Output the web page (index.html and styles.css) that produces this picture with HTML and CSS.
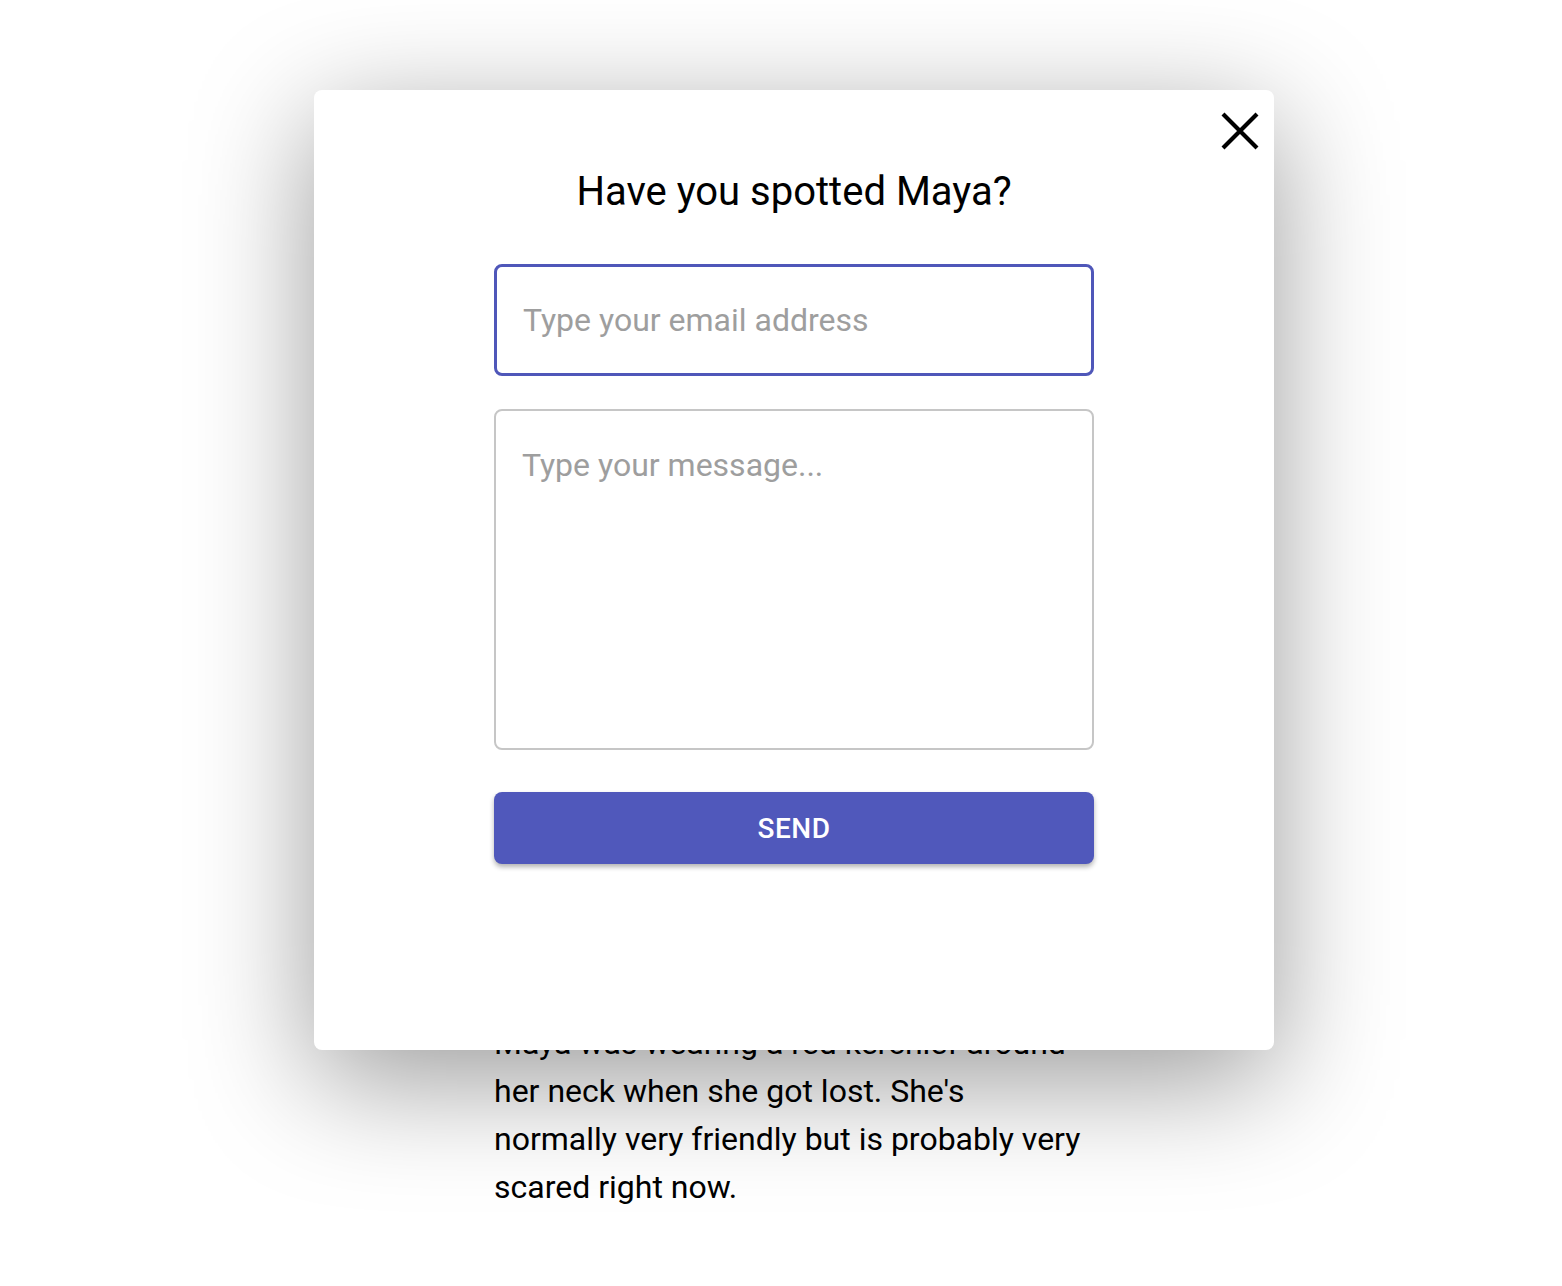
FILE: index.html
```html
<!DOCTYPE html>
<html lang="en">
<head>
<meta charset="utf-8">
<title>Have you spotted Maya?</title>
<link rel="stylesheet" href="styles.css">
</head>
<body>
<main class="article">
  <p class="story">Maya was wearing a red kerchief around her neck when she got lost. She's normally very friendly but is probably very scared right now.</p>
</main>

<div class="modal" role="dialog" aria-labelledby="modal-title">
  <button class="close" type="button" aria-label="Close">
    <svg width="40" height="40" viewBox="0 0 40 40" aria-hidden="true">
      <path d="M3 3 L37 37 M37 3 L3 37" stroke="#000" stroke-width="4.2" fill="none"/>
    </svg>
  </button>
  <form class="form">
    <h1 id="modal-title" class="title">Have you spotted Maya?</h1>
    <input class="field email" type="email" placeholder="Type your email address">
    <textarea class="field message" placeholder="Type your message..."></textarea>
    <button class="send" type="button">SEND</button>
  </form>
</div>
</body>
</html>
```

FILE: styles.css
```css
* { box-sizing: border-box; }

html, body {
  margin: 0;
  padding: 0;
  background: #fff;
  font-family: Roboto, "Liberation Sans", sans-serif;
  color: #000;
}

.article {
  width: 600px;
  margin-left: 494px;
  padding-top: 1019px;
}

.story {
  margin: 0;
  width: 594px;
  font-size: 32px;
  line-height: 48px;
}

.modal {
  position: absolute;
  left: 314px;
  top: 90px;
  width: 960px;
  height: 960px;
  background: #fff;
  border-radius: 8px;
  box-shadow: 0 30px 120px rgba(0, 0, 0, 0.4);
}

.close {
  position: absolute;
  top: 21px;
  right: 14px;
  width: 40px;
  height: 40px;
  padding: 0;
  border: 0;
  background: none;
  cursor: pointer;
}

.close svg { display: block; }

.form {
  width: 600px;
  margin: 0 auto;
  padding-top: 78px;
  display: flex;
  flex-direction: column;
}

.title {
  margin: 0 0 48px;
  font-size: 40px;
  line-height: 48px;
  font-weight: 400;
  text-align: center;
  color: #000;
}

.field {
  width: 100%;
  font-family: Roboto, "Liberation Sans", sans-serif;
  font-size: 32px;
  color: #000;
  border-radius: 8px;
  outline: none;
  background: #fff;
}

.field::placeholder { color: #9e9e9e; opacity: 1; }

.email {
  height: 112px;
  padding: 0 26px;
  border: 3px solid #4f57b9;
}

.message {
  height: 341px;
  margin-top: 33px;
  padding: 34px 26px;
  border: 2px solid #c6c6c6;
  resize: none;
  line-height: 40px;
}

.send {
  margin-top: 42px;
  height: 72px;
  border: 0;
  border-radius: 8px;
  background: #5058bb;
  color: #fff;
  font-family: Roboto, "Liberation Sans", sans-serif;
  font-size: 28px;
  font-weight: 500;
  letter-spacing: 0.5px;
  box-shadow: 0 3px 5px rgba(0, 0, 0, 0.3);
  cursor: pointer;
}
```
